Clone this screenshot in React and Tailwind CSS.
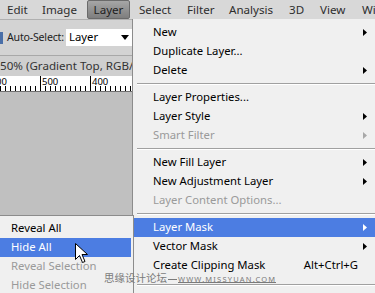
import React from "react";

const font = { fontFamily: '"Noto Sans", "Liberation Sans", sans-serif' };

const bar = [
  { label: "Edit", w: "w-[42px] pl-[7px]" },
  { label: "Image", w: "w-[45px]" },
  { label: "Layer", on: true },
  { label: "Select", w: "ml-[9px] w-[48px]" },
  { label: "Filter", w: "w-[42px]" },
  { label: "Analysis", w: "w-[60px]" },
  { label: "3D", w: "w-[31px]" },
  { label: "View", w: "w-[42px]" },
  { label: "Window", w: "w-[60px]" },
];

const items = [
  { label: "New", arrow: true },
  { label: "Duplicate Layer..." },
  { label: "Delete", arrow: true },
  { sep: true },
  { label: "Layer Properties..." },
  { label: "Layer Style", arrow: true },
  { label: "Smart Filter", arrow: true, off: true },
  { sep: true },
  { label: "New Fill Layer", arrow: true },
  { label: "New Adjustment Layer", arrow: true },
  { label: "Layer Content Options...", off: true },
  { sep: true },
  { label: "Layer Mask", arrow: true, on: true },
  { label: "Vector Mask", arrow: true },
  { label: "Create Clipping Mask", keys: "Alt+Ctrl+G" },
  { sep: true, tall: true },
  { label: "Smart Objects", arrow: true },
];

const sub = [
  { label: "Reveal All" },
  { label: "Hide All", on: true },
  { label: "Reveal Selection", off: true },
  { label: "Hide Selection", off: true },
];

function Arrow({ light, white }) {
  return (
    <svg width="4" height="7" viewBox="0 0 4 7">
      <path d="M0 0 L4 3.5 L0 7 Z" fill={white ? "#fff" : light ? "#a8a8a8" : "#000"} />
    </svg>
  );
}

function Ruler() {
  const ticks = [];
  for (let i = 0; i < 28; i++) {
    const x = i * 5 + 0.5;
    const long = i % 10 === 8;
    ticks.push(<line key={i} x1={x} x2={x} y1={long ? 0 : 10} y2={15} stroke="#000" strokeWidth="1" />);
  }
  return (
    <svg width="135" height="15" className="absolute left-0 top-0">
      {ticks}
    </svg>
  );
}

export default function App() {
  return (
    <div className="relative h-[293px] w-[375px] overflow-hidden bg-[#c0c0c0] text-[11.3px] text-black" style={font}>
      {/* menu bar */}
      <div className="flex h-[20px] items-center whitespace-nowrap border-b border-[#b0b0b0] bg-[#d8d8d8] text-[11.6px] text-[#2e2e2e]">
        {bar.map((b) =>
          b.on ? (
            <div
              key={b.label}
              className="flex h-[19px] w-[43px] shrink-0 items-center justify-center rounded-[2px] border border-[#6a6a6a] bg-gradient-to-b from-[#a6a6a6] to-[#7e7e7e] text-[#1e1e1e]"
            >
              {b.label}
            </div>
          ) : (
            <span key={b.label} className={`shrink-0 ${b.w}`}>
              {b.label}
            </span>
          )
        )}
      </div>

      {/* options bar */}
      <div className="flex h-[36px] items-center border-b border-[#a8a8a8] bg-[#d3d3d3]">
        <div className="h-[12px] w-[3px] bg-[#4a6fa8]" />
        <span className="ml-[4px] w-[59px] whitespace-nowrap text-[10.6px] tracking-[-0.2px] text-[#1e1e1e]">Auto-Select:</span>
        <div className="flex h-[17px] w-[67px] shrink-0 items-center justify-between bg-white pl-[3px] pr-[4px] text-[11.3px]">
          <span>Layer</span>
          <svg width="8" height="5" viewBox="0 0 8 5">
            <path d="M0 0 H8 L4 5 Z" fill="#000" />
          </svg>
        </div>
      </div>

      {/* document tab */}
      <div className="flex h-[20px] items-center bg-[#cfcfcf] text-[11.6px] text-[#333]">
        <span className="whitespace-nowrap">50% (Gradient Top, RGB/8)</span>
      </div>

      {/* ruler */}
      <div className="relative h-[16px] w-full border-b border-[#707070] bg-white">
        <Ruler />
        <span className="absolute left-[-4px] top-[1px] text-[9.5px] leading-[10px]">00</span>
        <span className="absolute left-[42px] top-[1px] text-[9.5px] leading-[10px]">500</span>
        <span className="absolute left-[92px] top-[1px] text-[9.5px] leading-[10px]">400</span>
      </div>

      {/* main menu */}
      <div className="absolute left-[132px] top-[19px] w-[246px] border-l border-[#8c8c8c] bg-[#f0f0f0] pt-[4px]">
        {items.map((it, i) =>
          it.sep ? (
            <div key={i} className={`flex items-center pl-[4px] ${it.tall ? "h-[14px] pt-[6px]" : "h-[8px]"}`}>
              <div className="h-[2px] w-full border-b border-t border-[#a0a0a0] border-b-white" />
            </div>
          ) : (
            <div
              key={i}
              className={`flex h-[19px] items-center pl-[20px] pr-[11px] ${
                it.on ? "bg-[#4c7de2] text-white" : it.off ? "text-[#9a9a9a]" : "text-black"
              }`}
            >
              <span className="flex-1 whitespace-nowrap">{it.label}</span>
              {it.keys && <span className="whitespace-nowrap">{it.keys}</span>}
              <span className="ml-[5px] flex w-[4px] items-center">
                {it.arrow && <Arrow light={it.off} white={it.on} />}
              </span>
            </div>
          )
        )}
      </div>

      {/* submenu */}
      <div className="absolute left-0 top-[215px] h-[80px] w-[134px] border border-l-0 border-[#8c8c8c] bg-[#f0f0f0] pt-[3px]">
        {sub.map((s) => (
          <div
            key={s.label}
            className={`flex h-[19px] w-[131px] items-center whitespace-nowrap pl-[11px] ${
              s.on ? "bg-[#4c7de2] text-white" : s.off ? "text-[#9a9a9a]" : "text-black"
            }`}
          >
            {s.label}
          </div>
        ))}
      </div>

      {/* cursor */}
      <svg width="14" height="21" viewBox="0 0 14 21" className="absolute left-[75px] top-[243px]">
        <path d="M0.5 0.5 V16.5 L4.5 12.5 L7.5 19.5 L10 18.5 L7 11.5 H12.5 Z" fill="#fff" stroke="#000" strokeWidth="1" />
      </svg>

      {/* watermark */}
      <div className="pointer-events-none absolute left-[104px] top-[270px] flex items-center whitespace-nowrap text-[#7a7a7a]">
        <span className="text-[10.5px]" style={{ fontFamily: '"Noto Sans CJK SC", sans-serif' }}>
          思缘设计论坛
        </span>
        <div className="mx-[1px] mt-[3px] h-px w-[9px] bg-[#7a7a7a]" />
        <span className="mt-[4px] border-b border-[#7a7a7a] text-[7.5px] leading-[6px] tracking-[1.2px]">WWW.MISSYUAN.COM</span>
      </div>
    </div>
  );
}
